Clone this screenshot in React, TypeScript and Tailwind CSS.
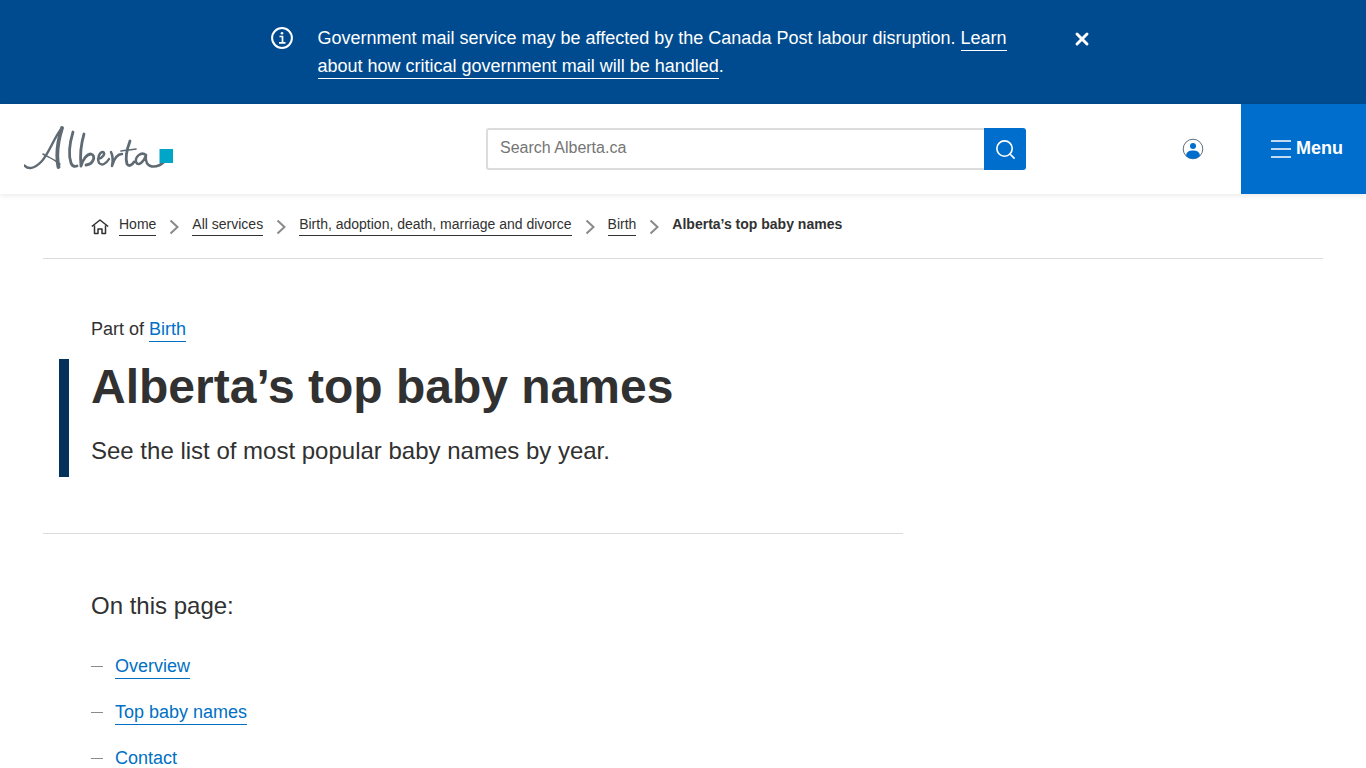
import { Search, X } from "lucide-react";

const crumbs = [
  "All services",
  "Birth, adoption, death, marriage and divorce",
  "Birth",
];

const pageLinks = ["Overview", "Top baby names", "Contact"];

function Chevron() {
  return (
    <svg width="10" height="16" viewBox="0 0 10 16" fill="none" className="mx-[13px] mt-[3px] shrink-0">
      <path d="M1.5 1.5 8.5 8l-7 6.500" stroke="#8a8a8a" strokeWidth="2" />
    </svg>
  );
}

function Logo() {
  return (
    <svg width="150" height="46" viewBox="0 0 150 46" fill="none" className="shrink-0">
      <g stroke="#5f6a72" strokeLinecap="round" strokeLinejoin="round" fill="none">
        {/* big A */}
        <path d="M0.500 39.500C4 43.500 10 43 17 36 25 28 30 11 38 2" strokeWidth="2.400" />
        <path d="M38 2C34.500 13 31.500 27 34.500 41" strokeWidth="3.800" />
        <path d="M19 28C24 31 30 33 36 38" strokeWidth="1.500" />
        {/* l */}
        <path d="M49 6C46 16 44 28 47 37 48 40 50 41 53 40" strokeWidth="2.800" />
        {/* b */}
        <path d="M60 8C57 18 56 30 57 40 59 33 63 28 67 28 72 29 70 38 62 39" strokeWidth="2.800" />
        {/* e */}
        <path d="M74 33C79 32 82 27 79 26 75 26 73 33 75 37 78 40 82 38 85 33" strokeWidth="2.400" />
        {/* r */}
        <path d="M87 26C89 30 89 35 88 40 90 33 93 28 98 28" strokeWidth="2.500" />
        {/* t */}
        <path d="M106 15C103 23 101 32 103 38 105 41 108 39 110 36" strokeWidth="2.800" />
        <path d="M97 25C102 24 107 24 112 23" strokeWidth="1.700" />
        {/* a and tail */}
        <path d="M122 29C117 25 111 31 112 36 114 41 120 36 122 29 121 35 123 40 128 40.500 133 41 137 39 141 35" strokeWidth="2.500" />
      </g>
      <rect x="135.500" y="23" width="13.500" height="14" fill="#00a5c8" />
    </svg>
  );
}

export default function App() {
  return (
    <div className="h-screen overflow-hidden bg-white font-['Liberation_Sans',Arial,sans-serif] text-[#313131]">
      <div className="flex h-[104px] bg-[#004b8f] pl-[270px] pt-[24px] text-white">
        <svg width="24" height="24" viewBox="0 0 24 24" fill="none" className="mt-[2px] shrink-0">
          <circle cx="12" cy="12" r="9.900" stroke="white" strokeWidth="2" />
          <path d="M9.500 10.500h3v6M9 16.800h6.500" stroke="white" strokeWidth="1.700" />
          <circle cx="12" cy="7.300" r="1.300" fill="white" />
        </svg>
        <p className="ml-[23.500px] w-[700px] text-[18px] leading-[28px]">
          Government mail service may be affected by the Canada Post labour disruption.{" "}
          <a className="border-b border-white pb-[2px]">Learn about how critical government mail will be handled</a>.
        </p>
        <X size={20} strokeWidth={3.500} className="ml-[54.500px] mt-[5px] shrink-0" />
      </div>

      <header className="relative z-10 flex h-[90px] items-center bg-white pl-[24px] shadow-[0_1px_6px_rgba(0,0,0,0.1)]">
        <Logo />
        <div className="ml-[312px] flex h-[42px] w-[540px] shrink-0">
          <div className="flex flex-1 items-center rounded-l-[3px] border-2 border-r-0 border-[#dcdcdc] pb-[2px] pl-[12px] text-[16px] text-[#757575]">
            Search Alberta.ca
          </div>
          <button className="flex w-[42px] items-center justify-center rounded-r-[3px] bg-[#006ecc] text-white">
            <Search size={23} strokeWidth={1.700} />
          </button>
        </div>
        <svg width="22" height="22" viewBox="0 0 22 22" className="ml-[156px] shrink-0">
          <circle cx="11" cy="11" r="9.800" fill="white" stroke="#5f6f7f" strokeWidth="1" />
          <circle cx="11" cy="8" r="3" fill="#006ecc" />
          <path d="M4 17.500C4.500 13.500 7.500 12.500 11 12.500s6.500 1 7 5C16.500 19.800 14 20.700 11 20.700S5.500 19.800 4 17.500Z" fill="#006ecc" />
        </svg>
        <div className="ml-[37px] flex h-[90px] w-[125px] shrink-0 items-center bg-[#006ecc] pl-[30px] text-white">
          <svg width="20" height="20" viewBox="0 0 20 20" className="shrink-0">
            <path d="M0 2h20M0 10h20M0 18h20" stroke="white" strokeWidth="1.600" />
          </svg>
          <span className="mb-[2px] ml-[5px] text-[18px] font-bold">Menu</span>
        </div>
      </header>

      <div className="mx-[43px] border-b border-[#dcdcdc] pl-[48px]">
        <nav className="flex h-[64px] items-center pb-[2px] text-[14px] leading-[18px]">
          <svg width="18" height="18" viewBox="0 0 18 18" fill="none" className="mr-[10px] mt-[4px] shrink-0">
            <path d="M0.800 8.500 9 2l8.200 6.500M3.500 7.500V15.500h3.500v-4.500h4v4.500h3.500V7.500" stroke="#313131" strokeWidth="1.500" strokeLinejoin="round" />
          </svg>
          <a className="border-b border-[#313131] pb-[2px]">Home</a>
          {crumbs.map((c) => (
            <div key={c} className="flex items-center">
              <Chevron />
              <a className="border-b border-[#313131] pb-[2px]">{c}</a>
            </div>
          ))}
          <Chevron />
          <span className="mb-[2px] font-bold">Alberta’s top baby names</span>
        </nav>
      </div>

      <main className="pl-[43px]">
        <div className="w-[860px] border-b border-[#dcdcdc] pb-[56px] pt-[58px]">
          <p className="pl-[48px] text-[18px] leading-[24px]">
            Part of <a className="border-b border-[#0070c4] pb-[2px] text-[#0070c4]">Birth</a>
          </p>
          <div className="ml-[16px] mt-[18px] h-[118px] border-l-[10px] border-[#05325a] pl-[22px] pt-[1px]">
            <h1 className="text-[48px] font-bold leading-[54px]">Alberta’s top baby names</h1>
            <p className="mt-[22px] text-[24px] leading-[30px]">See the list of most popular baby names by year.</p>
          </div>
        </div>

        <div className="pl-[48px] pt-[57px]">
          <h2 className="text-[24px] leading-[30px]">On this page:</h2>
          <ul className="mt-[33px] flex flex-col gap-[21px] text-[18px] leading-[24px]">
            {pageLinks.map((l) => (
              <li key={l} className="flex items-center">
                <span className="mr-[12px] h-px w-[12px] bg-[#8a8a8a]" />
                <a className="border-b border-[#0070c4] text-[#0070c4]">{l}</a>
              </li>
            ))}
          </ul>
        </div>
      </main>
    </div>
  );
}
